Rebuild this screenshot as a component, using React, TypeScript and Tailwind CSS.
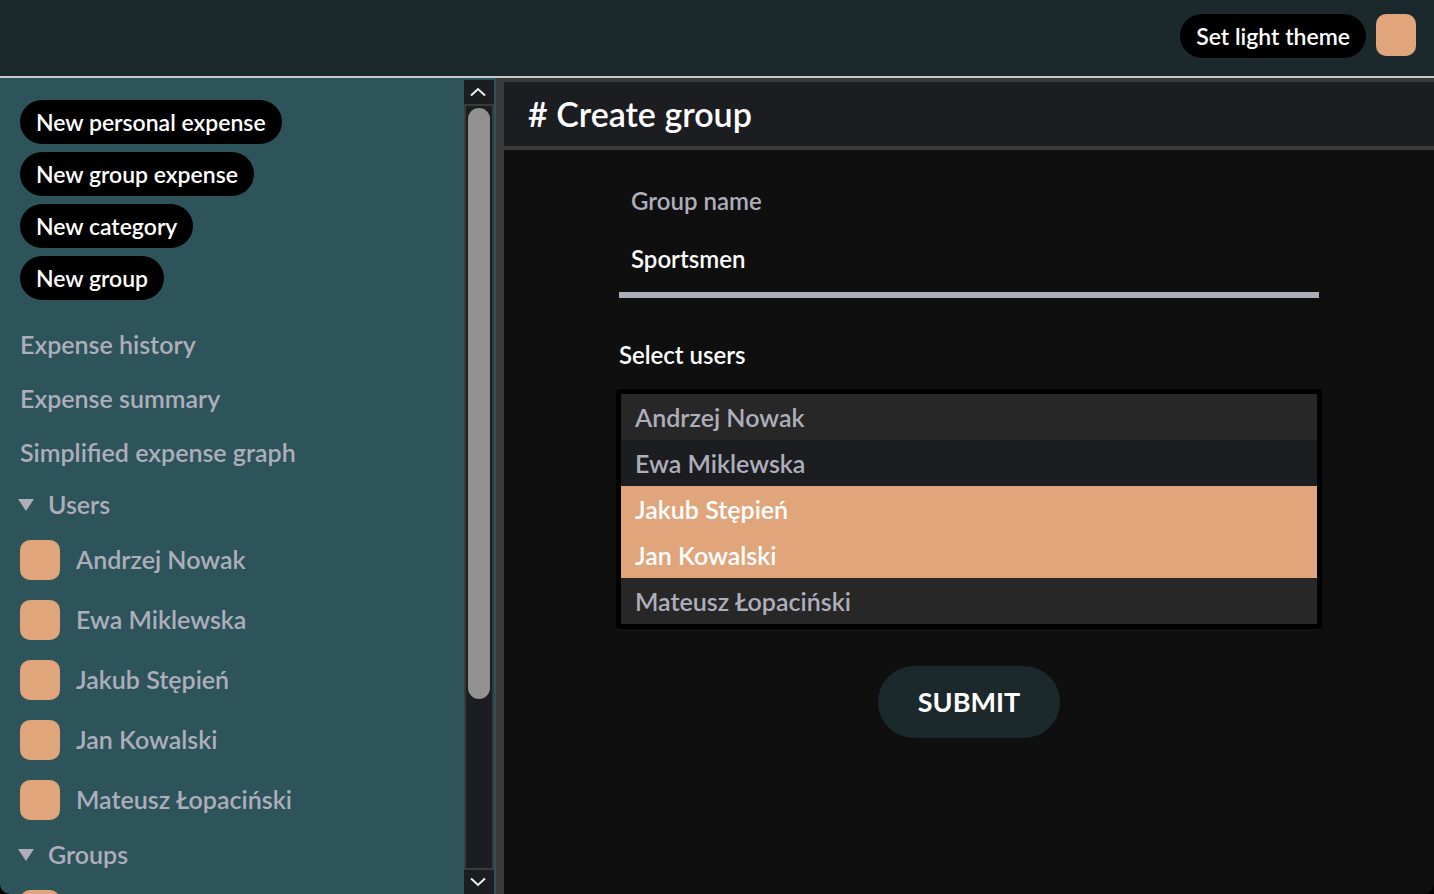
import { useState } from "react";

const people = ["Andrzej Nowak", "Ewa Miklewska", "Jakub Stępień", "Jan Kowalski", "Mateusz Łopaciński"];
const actions = ["New personal expense", "New group expense", "New category", "New group"];
const links = ["Expense history", "Expense summary", "Simplified expense graph"];

function PillButton({ label }: { label: string }) {
  return (
    <button type="button" className="flex h-11 items-center rounded-full bg-black px-4 text-[23px]/10 font-semibold text-white">
      {label}
    </button>
  );
}

function Avatar() {
  return <span className="block size-10 shrink-0 rounded-[10px] bg-[#e0a57b]" />;
}

function Section({ title, items }: { title: string; items: string[] }) {
  return (
    <details open>
      <summary className="-ml-0.5 flex h-[50px] cursor-pointer list-none items-center gap-3.5">
        <svg viewBox="0 0 16 12" className="h-3 w-4" aria-hidden="true">
          <path d="M0 0h16L8 12z" fill="currentColor" />
        </svg>
        {title}
      </summary>
      <ul>
        {items.map((item) => (
          <li key={item}>
            <a href="#" aria-label={item || "Group"} className="flex h-[60px] items-center gap-4">
              <Avatar />
              {item}
            </a>
          </li>
        ))}
      </ul>
    </details>
  );
}

function Arrow({ down = false }: { down?: boolean }) {
  return (
    <button type="button" aria-label={down ? "Scroll down" : "Scroll up"} className="flex h-6 shrink-0 items-center justify-center bg-[#1c1d21] pr-0.5">
      <svg viewBox="0 0 16 10" className="h-2.5 w-4" fill="none" stroke="#f0f0f0" strokeWidth="2" aria-hidden="true">
        <path d={down ? "M1 1.5l7 6.5 7-6.5" : "M1 8.5L8 2l7 6.5"} />
      </svg>
    </button>
  );
}

function Scrollbar() {
  return (
    <div className="mr-0.5 flex w-[30px] shrink-0 flex-col pt-0.5">
      <Arrow />
      <div className="min-h-0 flex-1 border-2 border-[#3a3a3a] bg-[#1c1d21] p-0.5">
        <div className="h-[78%] rounded-full bg-[#919191]" />
      </div>
      <Arrow down />
    </div>
  );
}

export default function App() {
  const [name, setName] = useState("Sportsmen");
  const [selected, setSelected] = useState(["Jakub Stępień", "Jan Kowalski"]);

  return (
    <div className="h-screen bg-black font-['Lato',sans-serif] font-semibold">
      <div className="flex h-full flex-col overflow-hidden rounded-b-[10px] bg-[#0f0f0f]">
        <header className="flex h-[78px] shrink-0 items-start justify-end gap-2.5 border-b-2 border-[#c8c8c8] bg-[#1b292c] pt-3.5 pr-[18px]">
          <PillButton label="Set light theme" />
          <span className="h-[42px] w-10 rounded-[10px] bg-[#e0a57b]" />
        </header>

        <div className="flex min-h-0 flex-1">
          <aside className="flex w-[504px] shrink-0 border-r-8 border-[#3a3a3a] bg-[#2c545a]">
            <div className="min-w-0 flex-1 overflow-hidden px-5 pt-[22px] text-[25px] text-[#aeaebb]">
              <div className="flex flex-col items-start gap-2">
                {actions.map((label) => (
                  <PillButton key={label} label={label} />
                ))}
              </div>
              <nav className="mt-[18px]">
                {links.map((label) => (
                  <a key={label} href="#" className="flex h-[54px] items-center">
                    {label}
                  </a>
                ))}
                <Section title="Users" items={people} />
                <Section title="Groups" items={[""]} />
              </nav>
            </div>
            <Scrollbar />
          </aside>

          <main className="min-w-0 flex-1">
            <h1 className="flex h-[72px] items-center border-y-4 border-[#3a3a3a] bg-[#1c1d21] px-6 text-[34px]/10 font-semibold text-white">
              # Create group
            </h1>
            <form className="mx-auto flex w-full max-w-[700px] flex-col pt-[31px]" onSubmit={(e) => e.preventDefault()}>
              <label htmlFor="group-name" className="px-3 text-2xl/10 text-[#aeaebb]">
                Group name
              </label>
              <input
                id="group-name"
                value={name}
                onChange={(e) => setName(e.target.value)}
                className="h-[77px] border-b-6 border-[#aeaebb] bg-transparent px-3 pt-1 text-2xl text-white outline-none"
              />
              <label htmlFor="users" className="mt-[37px] text-2xl/10 text-white">
                Select users
              </label>
              <select
                id="users"
                multiple
                size={5}
                value={selected}
                onChange={(e) => setSelected(Array.from(e.target.selectedOptions, (o) => o.value))}
                className="mt-[17px] h-[234px] appearance-none overflow-hidden rounded-[1px] border-2 border-black bg-[#1c1d21] p-0 text-[25px] text-[#aeaebb] outline-3 outline-black"
              >
                {people.map((person) => (
                  <option
                    key={person}
                    value={person}
                    className="flex h-[46px] items-center px-3.5 py-0 font-semibold odd:bg-[#272727] checked:bg-[#e0a57b] checked:bg-linear-to-r checked:from-[#e0a57b] checked:to-[#e0a57b] checked:text-white checked:[-webkit-text-fill-color:#fff]"
                  >
                    {person}
                  </option>
                ))}
              </select>
              <button type="submit" className="mt-10 flex h-[72px] items-center self-center rounded-full bg-[#1b292c] px-10 text-[27px]/10 font-bold text-white">
                SUBMIT
              </button>
            </form>
          </main>
        </div>
      </div>
    </div>
  );
}
